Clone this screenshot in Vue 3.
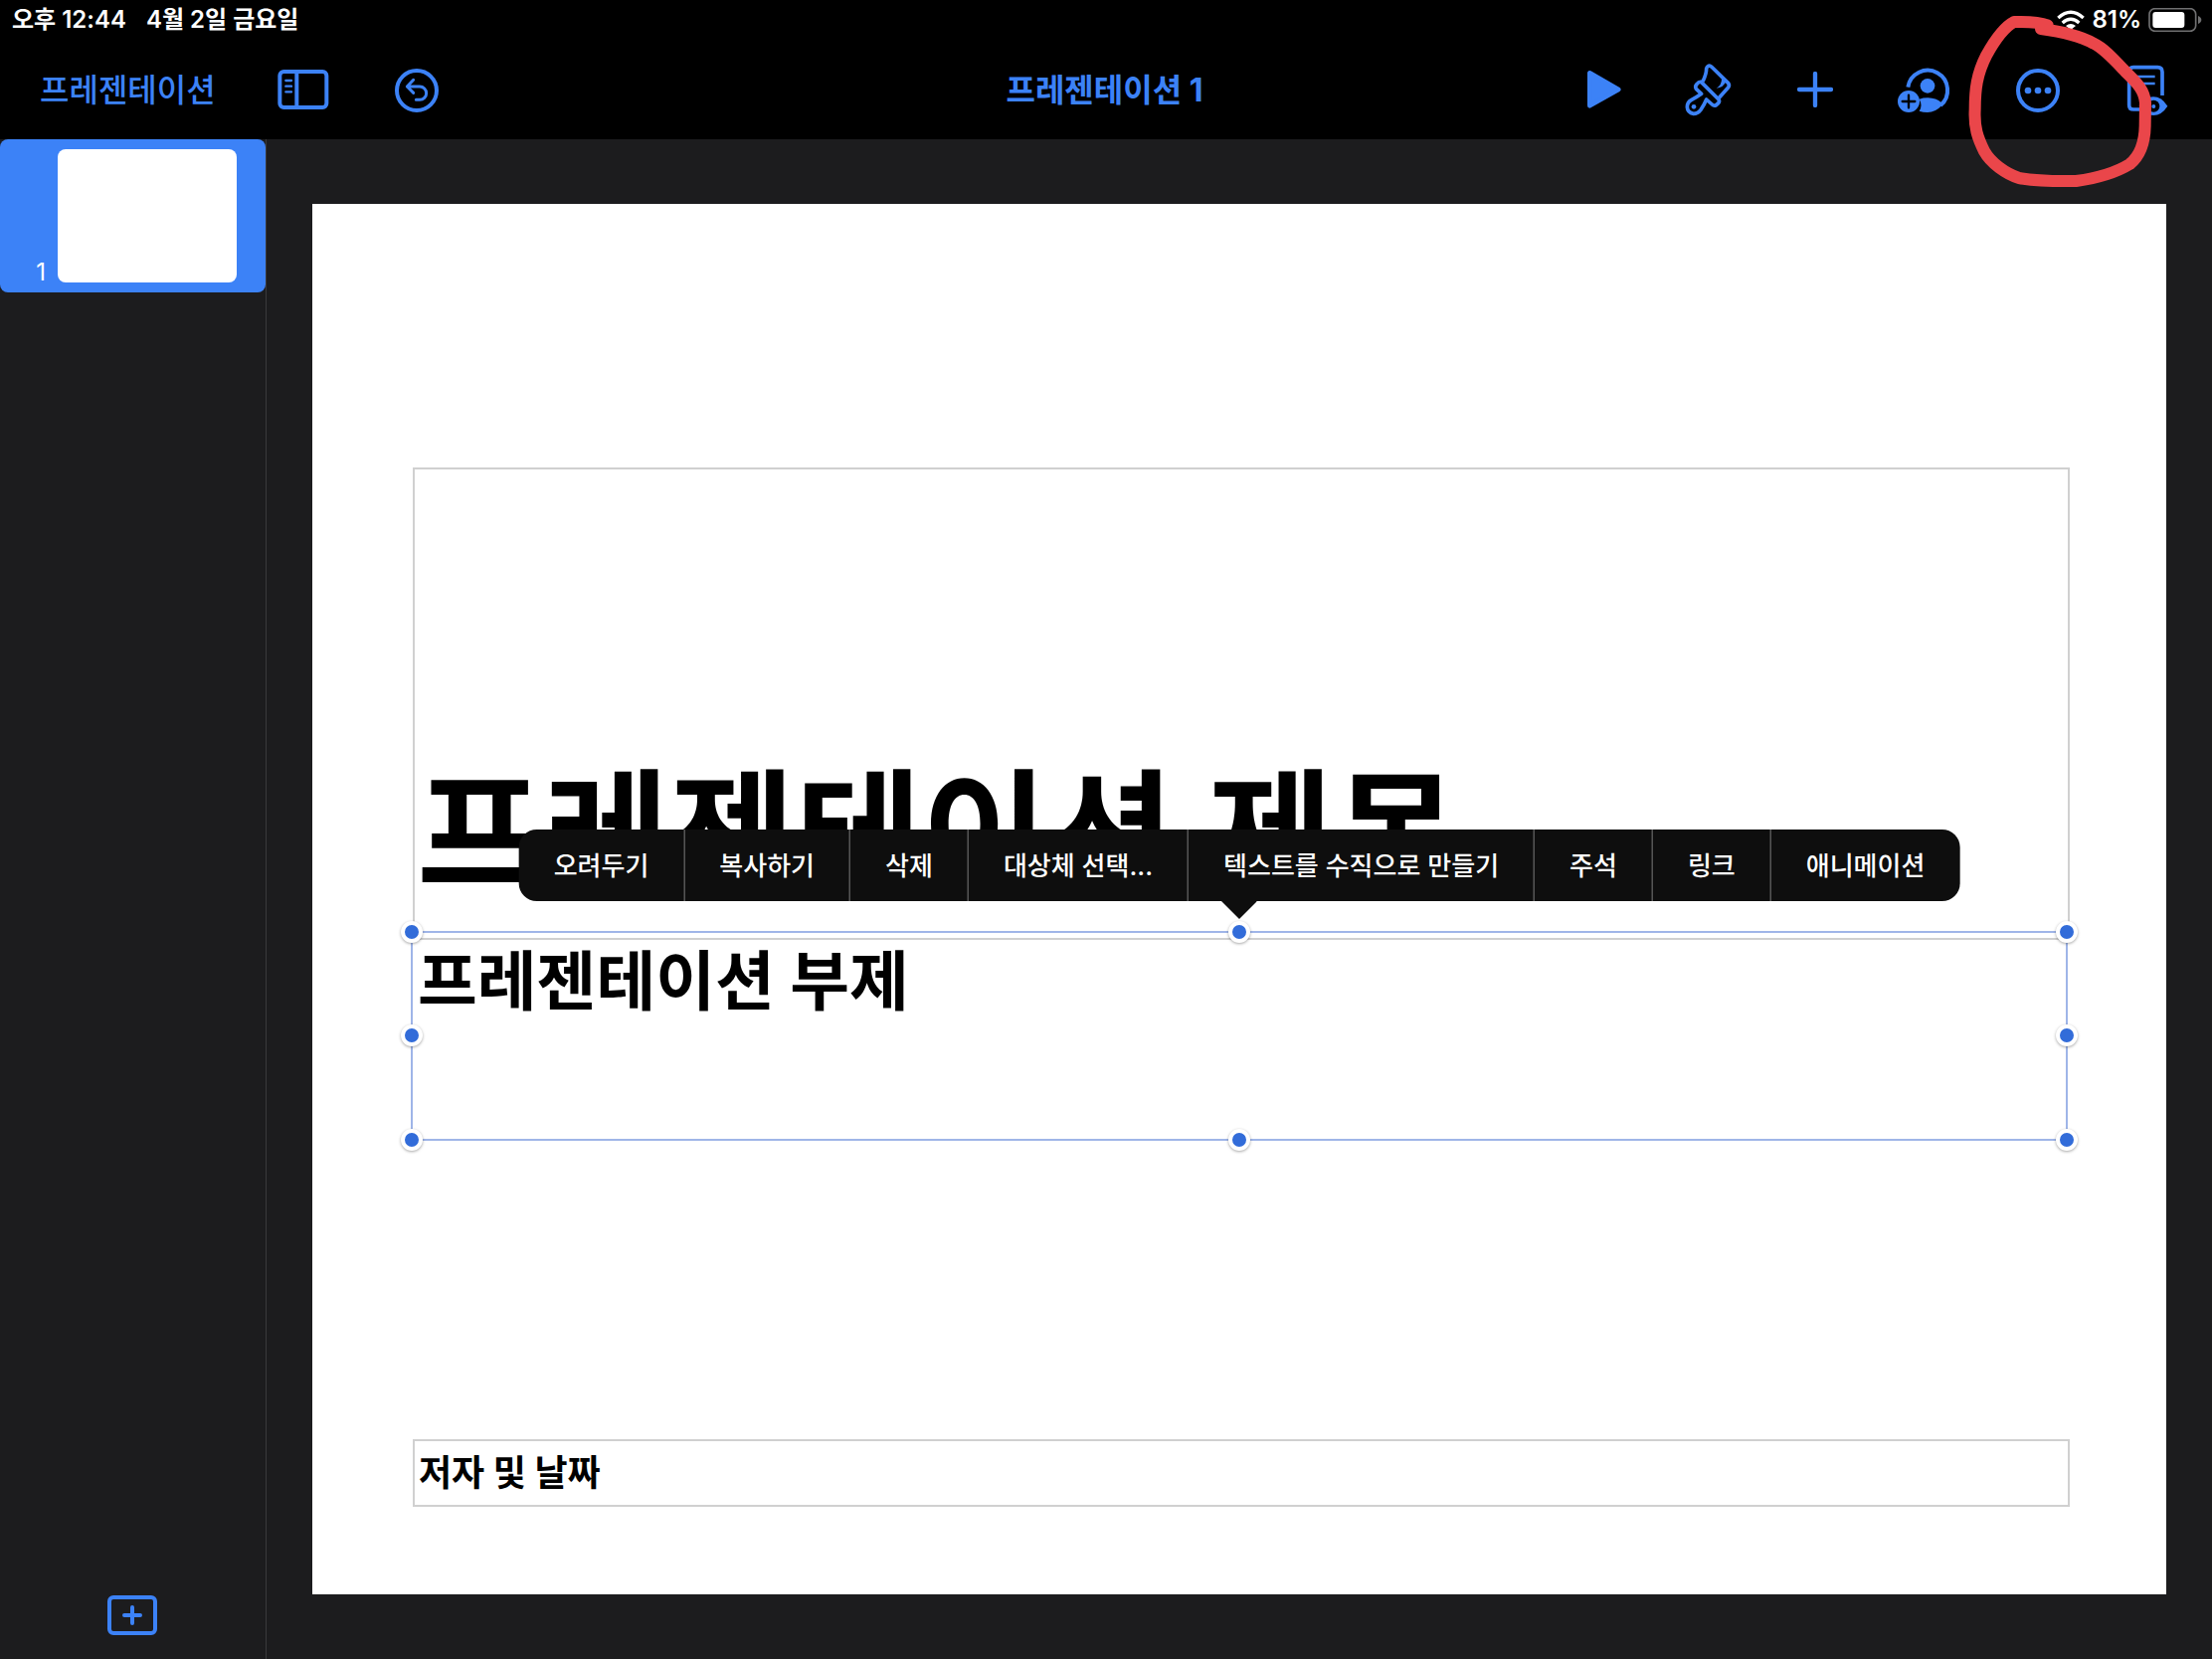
<script setup>
const menuItems = [
  '오려두기',
  '복사하기',
  '삭제',
  '대상체 선택...',
  '텍스트를 수직으로 만들기',
  '주석',
  '링크',
  '애니메이션',
]
const handles = ['nw', 'n', 'ne', 'w', 'e', 'sw', 's', 'se']
</script>

<template>
  <div class="app">
    <header class="top">
      <div class="status">
        <div class="status-group clock">
          <span>오후 12:44</span>
          <span>4월 2일 금요일</span>
        </div>
        <div class="status-group power">
          <svg width="28" height="20" viewBox="561 28 84 60" aria-hidden="true">
            <g fill="none" stroke="#fff" stroke-width="10">
              <path d="M565 52Q603 17 641 52" />
              <path d="M578 67Q603 45 628 67" />
            </g>
            <path d="M588 76Q603 64 618 76L603 88Z" fill="#fff" />
          </svg>
          <span>81%</span>
          <svg width="54" height="24" viewBox="842 24 162 72" aria-hidden="true">
            <rect x="845" y="26" width="140" height="68" rx="17" fill="none" stroke="#6f6f70" stroke-width="5" />
            <rect x="855" y="36" width="96" height="48" rx="9" fill="#fff" />
            <path d="M992 48Q1002 52 1002 60Q1002 68 992 72Z" fill="#6f6f70" />
          </svg>
        </div>
      </div>

      <nav class="toolbar" aria-label="도구 막대">
        <div class="tools left">
          <a class="back" href="#">프레젠테이션</a>
          <button type="button" aria-label="보기">
            <svg width="52" height="40" viewBox="836 210 156 120" fill="none" stroke="currentColor">
              <rect x="843" y="216" width="141" height="108" rx="12" stroke-width="12" />
              <path d="M894 216V324" stroke-width="12" />
              <path d="M861 243H878M861 260H878M861 277H878" stroke-width="7" stroke-linecap="round" />
            </svg>
          </button>
          <button type="button" aria-label="실행 취소">
            <svg width="44" height="46" viewBox="1191 201 132 138" fill="none" stroke="currentColor">
              <circle cx="1257" cy="273" r="60" stroke-width="12" />
              <path
                d="M1247 241L1228 261L1247 280M1228 261H1266A20 20 0 0 1 1266 301H1255"
                stroke-width="9"
                stroke-linecap="round"
                stroke-linejoin="round"
              />
            </svg>
          </button>
        </div>

        <h1 class="doc-title">프레젠테이션 1</h1>

        <div class="tools right">
          <button type="button" aria-label="재생">
            <svg width="34" height="40" viewBox="105 91 102 120" overflow="visible">
              <path d="M115 101V200L202 151Z" fill="currentColor" stroke="currentColor" stroke-width="14" stroke-linejoin="round" />
            </svg>
          </button>
          <button type="button" aria-label="포맷">
            <svg width="46" height="52" viewBox="404 72 138 156" fill="none" stroke="currentColor" stroke-linejoin="round" overflow="visible">
              <g stroke-width="11">
                <path d="M455 126Q466 103 466 87Q469 74 481 81L532 131Q537 138 531 145L503 176" />
                <path
                  d="M450 127L503 180Q507 187 501 192L494 198Q488 200 483 195L466 180Q459 197 449 211Q440 223 427 223Q409 220 408 203Q408 189 420 182Q437 173 451 163L435 148Q431 141 436 135Q444 125 450 127Z"
                />
              </g>
              <path d="M496 146Q512 138 512 118L526 124Q517 146 496 146Z" fill="currentColor" stroke="none" />
              <circle cx="428" cy="202" r="7" fill="currentColor" stroke="none" />
            </svg>
          </button>
          <button type="button" aria-label="삽입">
            <svg width="36" height="36" viewBox="744 96 108 108">
              <path d="M750 150H846M798 102V198" stroke="currentColor" stroke-width="13" stroke-linecap="round" />
            </svg>
          </button>
          <button type="button" aria-label="공동 작업">
            <svg width="52" height="46" viewBox="87 201 156 138" overflow="visible">
              <path d="M115 263A60 60 0 1 1 213 318" fill="none" stroke="currentColor" stroke-width="12" />
              <circle cx="174" cy="259" r="22" fill="currentColor" />
              <path
                d="M149 299Q160 295 175 295Q201 296 215 309L217 318Q198 339 174 339Q160 339 149 335Q160 318 149 299Z"
                fill="currentColor"
              />
              <circle cx="117" cy="306" r="33" fill="currentColor" />
              <path d="M98 306H136M117 287V325" stroke="#000" stroke-width="7" stroke-linecap="round" />
            </svg>
          </button>
          <button type="button" aria-label="기타">
            <svg width="44" height="46" viewBox="441 201 132 138">
              <circle cx="507" cy="273" r="60" fill="none" stroke="currentColor" stroke-width="12" />
              <g fill="currentColor">
                <circle cx="477" cy="273" r="10" />
                <circle cx="507" cy="273" r="10" />
                <circle cx="537" cy="273" r="10" />
              </g>
            </svg>
          </button>
          <button type="button" aria-label="읽기 보기">
            <svg width="44" height="52" viewBox="771 192 132 156">
              <path
                d="M822 330H795Q782 330 782 317V217Q782 203 795 203H868Q882 203 882 217V288"
                fill="none"
                stroke="currentColor"
                stroke-width="11"
              />
              <path d="M806 231H860M806 252H860" stroke="currentColor" stroke-width="7" />
              <path d="M812 320Q830 292 855 292Q880 292 898 320Q880 348 855 348Q830 348 812 320Z" fill="currentColor" />
              <circle cx="856" cy="320" r="18" fill="#000" />
              <circle cx="856" cy="321" r="6" fill="currentColor" />
            </svg>
          </button>
        </div>
      </nav>

      <svg class="ink" width="344" height="200" viewBox="0 0 1032 600" aria-hidden="true">
        <path
          d="M536 76C505 65 470 66 435 66C400 84 372 130 352 166C322 225 317 270 317 330C314 385 325 415 345 456C365 492 410 524 450 537C500 546 560 547 622 546C680 538 740 522 784 495C815 470 829 430 830 380L831 310C828 268 800 245 770 215C735 178 705 145 675 131C630 106 570 94 516 87"
          fill="none"
          stroke="#ea464a"
          stroke-width="36"
          stroke-linecap="round"
          stroke-linejoin="round"
        />
      </svg>
    </header>

    <div class="body">
      <aside class="sidebar">
        <button type="button" class="slide-item" aria-label="슬라이드 1">
          <span class="slide-no">1</span>
          <span class="thumb"></span>
        </button>
        <button type="button" class="add" aria-label="슬라이드 추가">
          <svg width="52" height="42" viewBox="0 0 52 42" fill="none" stroke="currentColor">
            <rect x="2" y="3" width="46" height="36" rx="4" stroke-width="4" />
            <path d="M17 21H33M25 13V29" stroke-width="4" stroke-linecap="round" />
          </svg>
        </button>
      </aside>

      <main class="canvas">
        <section class="slide">
          <h2 class="box title">프레젠테이션 제목</h2>
          <div class="selected">
            <h3 class="subtitle">프레젠테이션 부제</h3>
            <span v-for="h in handles" :key="h" class="handle" :class="h"></span>
            <div class="menu" role="menu">
              <button v-for="item in menuItems" :key="item" type="button" role="menuitem">{{ item }}</button>
            </div>
          </div>
          <p class="box author">저자 및 날짜</p>
        </section>
      </main>
    </div>
  </div>
</template>

<style>
body {
  margin: 0;
  background: #1c1c1e;
}
</style>

<style scoped>
.app {
  display: flex;
  flex-direction: column;
  min-height: 100vh;
  background: #1c1c1e;
  color: #fff;
  font-family: Inter, 'Noto Sans CJK KR', sans-serif;
}
.app *,
.app {
  box-sizing: border-box;
}
button {
  margin: 0;
  padding: 0;
  border: 0;
  background: none;
  color: inherit;
  font: inherit;
  cursor: pointer;
}
svg {
  display: block;
}
h1,
h2,
h3,
p {
  margin: 0;
}

.top {
  position: relative;
  background: #000;
  color: #3c82f7;
}
.status {
  display: flex;
  justify-content: space-between;
  height: 40px;
  padding: 0 10px 0 12px;
  color: #fff;
  font-size: 24px;
  font-weight: 600;
  line-height: 40px;
}
.status-group {
  display: flex;
  align-items: center;
}
.clock {
  gap: 20px;
}
.power {
  gap: 7px;
}
.toolbar {
  display: grid;
  grid-template-columns: 1fr auto 1fr;
  align-items: center;
  height: 100px;
  padding: 0 43px 0 40px;
}
.tools {
  display: flex;
  align-items: center;
}
.left {
  gap: 66px;
}
.right {
  justify-content: flex-end;
  gap: 66px;
}
.back {
  margin-right: -4px;
  padding-bottom: 4px;
  color: inherit;
  font-size: 32px;
  font-weight: 500;
  text-decoration: none;
}
.doc-title {
  padding-bottom: 4px;
  font-size: 32px;
  font-weight: 700;
}
.ink {
  position: absolute;
  top: 0;
  right: 0;
  z-index: 2;
  pointer-events: none;
}

.body {
  display: flex;
  flex: 1;
}
.sidebar {
  display: flex;
  flex: none;
  flex-direction: column;
  justify-content: space-between;
  align-items: center;
  width: 268px;
  padding-bottom: 23px;
  border-right: 1px solid #3a3a3c;
}
.slide-item {
  display: flex;
  align-items: flex-end;
  gap: 12px;
  width: 100%;
  padding: 10px 29px 10px 0;
  border-radius: 8px;
  background: #3c82f7;
}
.slide-no {
  flex: 1;
  text-align: right;
  font-size: 24px;
  line-height: 20px;
}
.thumb {
  width: 180px;
  height: 134px;
  border-radius: 8px;
  background: #fff;
}
.add {
  color: #3c82f7;
}

.canvas {
  flex: 1;
  padding: 65px 46px;
}
.slide {
  padding: 265px 97px 88px 101px;
  background: #fff;
  color: #000;
}
.box {
  border: 2px solid #d0d0d0;
}
.title {
  display: flex;
  align-items: flex-end;
  height: 475px;
  padding: 0 2px 4px;
  font-size: 138px;
  font-weight: 700;
  line-height: 200px;
}
.selected {
  position: relative;
  height: 211px;
  margin: -9px 2px 0 -2px;
  border: 2px solid #9fb5e8;
}
.subtitle {
  padding: 0 5px;
  font-size: 65px;
  font-weight: 700;
  line-height: 98px;
}
.author {
  margin-top: 300px;
  padding: 0 4px;
  font-size: 36px;
  font-weight: 700;
  line-height: 64px;
}

.handle {
  position: absolute;
  width: 22px;
  height: 22px;
  margin: -12px;
  border: 4px solid #fff;
  border-radius: 50%;
  background: #326cd9;
  box-shadow: 0 1px 3px rgba(0, 0, 0, 0.35);
}
.nw,
.n,
.ne {
  top: 0;
}
.w,
.e {
  top: 50%;
}
.sw,
.s,
.se {
  top: calc(100% + 2px);
}
.nw,
.w,
.sw {
  left: 0;
}
.n,
.s {
  left: calc(50% + 1px);
}
.ne,
.e,
.se {
  left: calc(100% + 2px);
}

.menu {
  position: absolute;
  bottom: calc(100% + 32px);
  left: 50%;
  display: flex;
  border-radius: 18px;
  background: #0e0e0e;
  transform: translateX(-50%);
}
.menu::after {
  position: absolute;
  top: 100%;
  left: 50%;
  width: 36px;
  height: 18px;
  margin-left: -18px;
  background: #0e0e0e;
  clip-path: polygon(0 0, 100% 0, 50% 100%);
  content: '';
}
.menu button {
  height: 72px;
  padding: 0 35px 4px;
  color: #fff;
  font-size: 26px;
  font-weight: 500;
  white-space: nowrap;
}
.menu button + button {
  border-left: 1px solid #7c7c7c;
}
</style>
